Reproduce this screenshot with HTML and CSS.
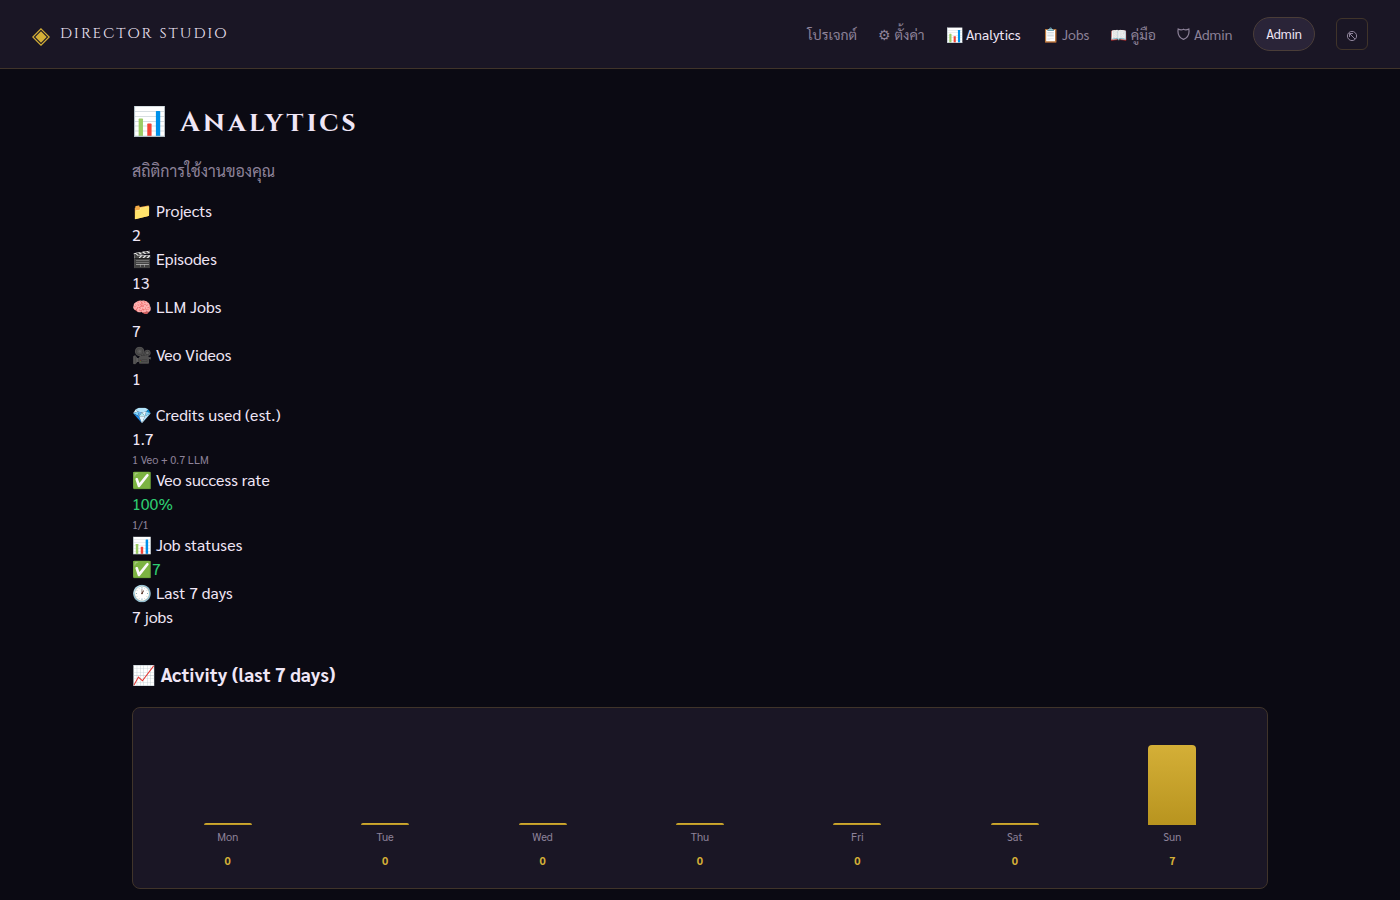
FILE: index.html
```html
<!DOCTYPE html>
<html lang="th">
<head>
    <meta charset="UTF-8">
    <meta name="viewport" content="width=device-width, initial-scale=1.0">
    <title>Analytics - Director Studio</title>
    <link rel="stylesheet" href="styles.css">
</head>
<body>
    <header class="topbar">
        <a class="brand" href="#">
            <svg class="brand-mark" viewBox="0 0 18 18" aria-hidden="true">
                <path d="M9 .8 17.2 9 9 17.2.8 9Z" fill="none" stroke="currentColor" stroke-width="1.2"/>
                <path d="M9 3.3 14.7 9 9 14.7 3.3 9Z" fill="currentColor"/>
            </svg>
            <span class="brand-name">DIRECTOR STUDIO</span>
        </a>
        <nav class="nav">
            <a href="#">โปรเจกต์</a>
            <a href="#">⚙ ตั้งค่า</a>
            <a class="active" href="#">📊 Analytics</a>
            <a href="#">📋 Jobs</a>
            <a href="#">📖 คู่มือ</a>
            <a class="with-icon" href="#">
                <svg class="shield" viewBox="0 0 13 12" aria-hidden="true">
                    <path d="M6.5 1.2C5 2 3 2 1.2 1 .4 5.5 2 9.500 6.500 11.400 11 9.500 12.600 5.500 11.800 1 10 2 8 2 6.500 1.200Z" fill="none" stroke="currentColor" stroke-width="1.2"/>
                </svg>
                Admin
            </a>
            <a class="user-pill" href="#">Admin</a>
            <button class="logout" type="button" aria-label="Logout">
                <svg viewBox="0 0 12 12" aria-hidden="true">
                    <circle cx="6" cy="6" r="4.600" fill="none" stroke="currentColor"/>
                    <path d="M9 9 3.500 3.500M3.500 7V3.500H7" fill="none" stroke="currentColor"/>
                </svg>
            </button>
        </nav>
    </header>

    <main class="container">
        <h1>📊 Analytics</h1>
        <p class="subtitle">สถิติการใช้งานของคุณ</p>

        <section class="stats">
            <div>📁 Projects</div>
            <div>2</div>
            <div>🎬 Episodes</div>
            <div>13</div>
            <div>🧠 LLM Jobs</div>
            <div>7</div>
            <div>🎥 Veo Videos</div>
            <div>1</div>
        </section>

        <section class="stats">
            <div>💎 Credits used (est.)</div>
            <div>1.7</div>
            <div class="note">1 Veo + 0.7 LLM</div>
            <div>✅ Veo success rate</div>
            <div class="good">100%</div>
            <div class="note">1/1</div>
            <div>📊 Job statuses</div>
            <div class="good">✅7</div>
            <div>🕐 Last 7 days</div>
            <div>7 jobs</div>
        </section>

        <h2>📈 Activity (last 7 days)</h2>
        <section class="chart">
            <div class="day"><div class="bar"></div><span class="label">Mon</span><span class="count">0</span></div>
            <div class="day"><div class="bar"></div><span class="label">Tue</span><span class="count">0</span></div>
            <div class="day"><div class="bar"></div><span class="label">Wed</span><span class="count">0</span></div>
            <div class="day"><div class="bar"></div><span class="label">Thu</span><span class="count">0</span></div>
            <div class="day"><div class="bar"></div><span class="label">Fri</span><span class="count">0</span></div>
            <div class="day"><div class="bar"></div><span class="label">Sat</span><span class="count">0</span></div>
            <div class="day"><div class="bar" style="height: 80px"></div><span class="label">Sun</span><span class="count">7</span></div>
        </section>
    </main>
</body>
</html>
```
FILE: styles.css
```css
* {
    margin: 0;
    padding: 0;
    box-sizing: border-box;
}
body {
    font-family: "Sarabun", "Open Sans", "Noto Sans Thai", sans-serif;
    font-size: 16px;
    line-height: 24px;
    min-height: 100vh;
    background: #0b0a13;
    color: #f0e6f6;
    overflow-x: hidden;
}
a {
    color: inherit;
    text-decoration: none;
}
.topbar {
    display: flex;
    justify-content: space-between;
    align-items: center;
    min-height: 69px;
    padding: 16px 32px;
    background: #1a1625;
    border-bottom: 1px solid #40342a;
}
.brand {
    display: flex;
    align-items: center;
    gap: 10px;
}
.brand-mark {
    width: 18px;
    height: 18px;
    margin-top: 6px;
    color: #d4af37;
}
.brand-name {
    font-family: "Cinzel", "Liberation Serif", serif;
    font-size: 15px;
    letter-spacing: 2px;
}
.nav {
    display: flex;
    align-items: center;
    gap: 21px;
    font-size: 14px;
    color: #8d8299;
}
.nav .active {
    color: #f0e6f6;
}
.nav .with-icon {
    display: flex;
    align-items: center;
    gap: 4px;
}
.shield {
    width: 13px;
    height: 12px;
}
.nav .user-pill {
    padding: 4px 12px;
    border: 1px solid #4a3d38;
    border-radius: 20px;
    background: #2a2438;
    color: #f0e6f6;
    font-size: 13px;
}
.logout {
    display: flex;
    align-items: center;
    justify-content: center;
    width: 32px;
    height: 32px;
    padding-top: 4px;
    border: 1px solid #40342a;
    border-radius: 6px;
    background: transparent;
    color: #8d8299;
}
.logout svg {
    width: 12px;
    height: 12px;
}
.container {
    max-width: 1200px;
    margin: 0 auto;
    padding: 32px;
}
h1 {
    font-family: "Cinzel", "Liberation Serif", serif;
    font-size: 28px;
    line-height: 44px;
    letter-spacing: 3px;
}
.subtitle {
    margin: 14px 0 16px;
    color: #8d8299;
}
.stats {
    margin-bottom: 12px;
}
.note {
    font-size: 11px;
    line-height: 17px;
    color: #8d8299;
}
.good {
    color: #2ecc71;
}
h2 {
    margin: 32px 0 20px;
    font-size: 19px;
    line-height: 26px;
}
.chart {
    display: flex;
    align-items: flex-end;
    min-height: 182px;
    padding: 16px;
    background: #1a1625;
    border: 1px solid #40342a;
    border-radius: 8px;
}
.day {
    display: flex;
    flex: 1;
    flex-direction: column;
    align-items: center;
    font-size: 11px;
}
.bar {
    width: 48px;
    height: 2px;
    border-radius: 4px 4px 0 0;
    background: linear-gradient(#d4af37, #b8941f);
}
.label {
    color: #8d8299;
}
.count {
    color: #d4af37;
    font-weight: bold;
    line-height: 23px;
}
```
